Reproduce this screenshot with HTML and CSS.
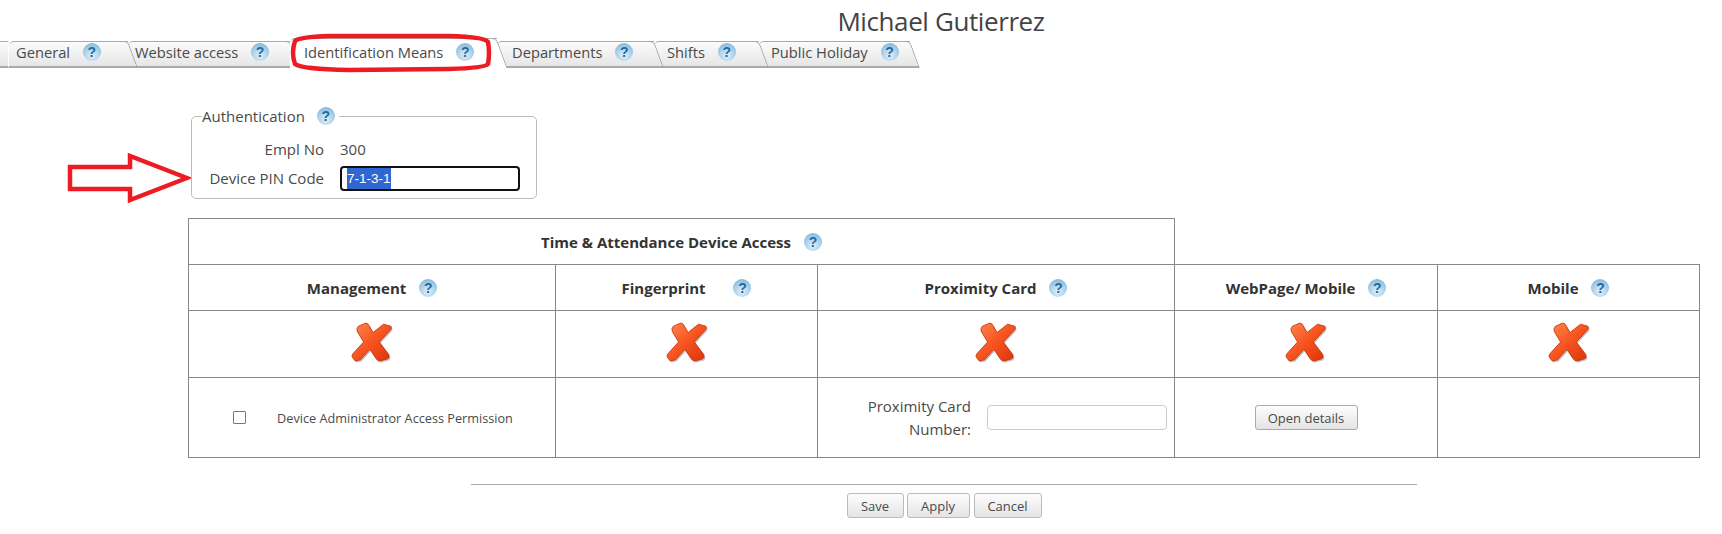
FILE: index.html

```html
<!DOCTYPE html>
<html lang="en">
<head>
  <meta charset="UTF-8" />
  <title>Michael Gutierrez</title>
  <link rel="stylesheet" href="styles.css">
</head>
<body>
  <svg class="defs" width="0" height="0">
    <defs>
      <linearGradient id="xfill" x1="0" y1="0" x2="1" y2="1">
        <stop offset="0" stop-color="#ff8a50"/>
        <stop offset="0.5" stop-color="#f7541f"/>
        <stop offset="1" stop-color="#d9340c"/>
      </linearGradient>
      <symbol id="cross" viewBox="0 0 40 40">
        <path d="M7 5 L14 2 Q16 2 17 4 L21 11 L31 3 L38 5 Q39 6 38 8 L27 20 L36 32 Q37 35 35 36 L28 38 Q25 38 24 36 L18 27 L9 37 L4 38 L1 34 Q1 32 2 31 L12 20 L6 10 Q5 7 7 5 Z" fill="#7a7a7a" opacity="0.45" transform="translate(1 1.5)"/>
        <path d="M7 5 L14 2 Q16 2 17 4 L21 11 L31 3 L38 5 Q39 6 38 8 L27 20 L36 32 Q37 35 35 36 L28 38 Q25 38 24 36 L18 27 L9 37 L4 38 L1 34 Q1 32 2 31 L12 20 L6 10 Q5 7 7 5 Z" fill="url(#xfill)" stroke="#c8300c" stroke-width="0.8"/>
      </symbol>
    </defs>
  </svg>

  <h1 class="title">Michael Gutierrez</h1>

  <div class="tabs">
    <div class="tab-stub"></div>
    <div class="tab tab-general">General <span class="help">?</span></div>
    <div class="tab tab-web">Website access <span class="help">?</span></div>
    <div class="tab tab-id active">Identification Means <span class="help">?</span></div>
    <div class="tab tab-dep">Departments <span class="help">?</span></div>
    <div class="tab tab-shifts">Shifts <span class="help">?</span></div>
    <div class="tab tab-hol">Public Holiday <span class="help">?</span></div>
  </div>

  <!-- red marks drawn over the page -->
  <svg class="mark mark-ring" width="204" height="40" viewBox="0 0 204 40">
    <path d="M6 8 Q10 4 40 3 L160 3 Q196 4 199 9 Q201 20 199 31 Q196 35 160 36 L60 37 Q12 36 6 31 Q2 20 6 8 Z" fill="none" stroke="#ed1c24" stroke-width="4.5"/>
  </svg>
  <svg class="mark mark-arrow" width="124" height="52" viewBox="0 0 124 52">
    <path d="M3 14 H63 V3 L120 25 L63 47 V36 H3 Z" fill="none" stroke="#ed1c24" stroke-width="4.5"/>
  </svg>

  <fieldset class="auth">
    <legend>Authentication <span class="help">?</span></legend>
    <div class="auth-row">
      <span class="auth-label">Empl No</span>
      <span>300</span>
    </div>
    <div class="auth-row">
      <span class="auth-label">Device PIN Code</span>
      <div class="pin-input"><span class="selected">7-1-3-1</span></div>
    </div>
  </fieldset>

  <table class="access">
    <colgroup>
      <col class="c1"><col class="c2"><col class="c3"><col class="c4"><col class="c5">
    </colgroup>
    <tr class="row-title">
      <th colspan="3">Time &amp; Attendance Device Access <span class="help">?</span></th>
      <td class="blank" colspan="2"></td>
    </tr>
    <tr class="row-head">
      <th>Management <span class="help">?</span></th>
      <th>Fingerprint <span class="help help-far">?</span></th>
      <th>Proximity Card <span class="help">?</span></th>
      <th>WebPage/ Mobile <span class="help">?</span></th>
      <th>Mobile <span class="help">?</span></th>
    </tr>
    <tr class="row-icons">
      <td><svg class="cross"><use href="#cross"/></svg></td>
      <td><svg class="cross"><use href="#cross"/></svg></td>
      <td><svg class="cross"><use href="#cross"/></svg></td>
      <td><svg class="cross"><use href="#cross"/></svg></td>
      <td><svg class="cross"><use href="#cross"/></svg></td>
    </tr>
    <tr class="row-detail">
      <td>
        <div class="perm">
          <span class="checkbox"></span>
          <span>Device Administrator Access Permission</span>
        </div>
      </td>
      <td></td>
      <td>
        <div class="prox">
          <span class="prox-label">Proximity Card Number:</span>
          <input class="text-input" type="text">
        </div>
      </td>
      <td><button class="btn btn-open">Open details</button></td>
      <td></td>
    </tr>
  </table>

  <div class="actions">
    <button class="btn btn-save">Save</button>
    <button class="btn btn-apply">Apply</button>
    <button class="btn btn-cancel">Cancel</button>
  </div>
</body>
</html>
```

FILE: styles.css

```css
body {
  margin: 0;
  background-color: #fff;
  color: #4a4a4a;
  font-family: "Open Sans", "Noto Sans", sans-serif;
  font-size: 15px;
  position: relative;
  height: 534px;
  overflow: hidden;
}

.defs {
  position: absolute;
}

.title {
  margin: 0;
  height: 40px;
  padding-left: 160px;
  text-align: center;
  font-size: 26px;
  line-height: 42px;
  font-weight: 400;
  color: #444;
  letter-spacing: -0.4px;
}

.help {
  display: inline-block;
  width: 18px;
  height: 18px;
  margin-left: 9px;
  border-radius: 50%;
  background: radial-gradient(circle at 50% 70%, #e3f1fa 0%, #a9d0ea 50%, #6fa9d4 100%);
  color: #1f6aa0;
  font-family: "Liberation Sans", sans-serif;
  font-size: 14px;
  font-weight: bold;
  line-height: 18px;
  text-align: center;
  vertical-align: 1px;
  letter-spacing: 0;
}

.help-far {
  margin-left: 24px;
}

/* tabs */
.tabs {
  display: flex;
  height: 28px;
  font-size: 14.7px;
}

.tab-stub {
  width: 9px;
  margin-top: 1px;
  box-sizing: border-box;
  background: linear-gradient(#fbfbfb, #e6e6e6);
  border-top: 1px solid #aaa;
  border-bottom: 2px solid #aaa;
  border-right: 1px solid #fff;
}

.tab {
  position: relative;
  box-sizing: border-box;
  height: 27px;
  margin-top: 1px;
  padding-left: 7px;
  line-height: 21px;
  white-space: nowrap;
  background: linear-gradient(#fbfbfb, #e6e6e6);
  border-top: 1px solid #aaa;
  border-bottom: 2px solid #aaa;
  border-top-left-radius: 5px;
}

.tab::after {
  content: "";
  position: absolute;
  top: -1px;
  bottom: -2px;
  right: -5px;
  width: 14px;
  box-sizing: border-box;
  background: linear-gradient(#fbfbfb, #e6e6e6);
  border-top: 1px solid #aaa;
  border-bottom: 2px solid #aaa;
  border-right: 1px solid #999;
  border-top-right-radius: 5px;
  transform: skewX(20deg);
  z-index: 1;
}

.tab .help {
  position: relative;
  z-index: 2;
}

.tab.active {
  height: 30px;
  margin-top: -2px;
  padding-left: 14px;
  line-height: 27px;
  background: #fff;
  border-bottom: 0;
  z-index: 3;
}

.tab.active::after {
  background: #fff;
  border-bottom: 0;
  bottom: 0;
}

.tab-general { width: 119px; }
.tab-web { width: 162px; }
.tab-id { width: 207px; }
.tab-dep { width: 157px; padding-left: 15px; }
.tab-shifts { width: 105px; padding-left: 13px; }
.tab-hol { width: 151px; padding-left: 12px; }

/* red marks */
.mark {
  position: absolute;
}

.mark-ring {
  left: 289px;
  top: 33px;
  z-index: 5;
}

.mark-arrow {
  left: 67px;
  top: 153px;
}

/* authentication box */
.auth {
  box-sizing: border-box;
  width: 346px;
  height: 93px;
  margin: 38px 0 0 191px;
  padding: 0 15px 0 0;
  border: 1px solid #bbb;
  border-radius: 5px;
}

.auth legend {
  padding: 0;
  margin-left: 10px;
  padding-right: 4px;
  line-height: 20px;
}

.auth legend .help {
  margin-left: 8px;
}

.auth-row {
  display: flex;
  align-items: center;
  height: 26px;
  margin-top: 3px;
}

.auth-row:first-of-type {
  margin-top: 10px;
}

.auth-label {
  width: 132px;
  margin-right: 16px;
  text-align: right;
}

.pin-input {
  box-sizing: border-box;
  width: 180px;
  height: 25px;
  padding: 0 5px;
  border: 2px solid #111;
  border-radius: 4px;
  font-family: "Liberation Sans", sans-serif;
  font-size: 13.5px;
  line-height: 21px;
}

.selected {
  display: inline-block;
  background-color: #2f66d0;
  color: #fff;
}

/* access table */
.access {
  width: 1511px;
  margin: 19px 0 0 188px;
  border-collapse: collapse;
  table-layout: fixed;
}

.c1 { width: 367px; }
.c2 { width: 262px; }
.c3 { width: 357px; }
.c4 { width: 263px; }
.c5 { width: 262px; }

.access th,
.access td {
  padding: 0;
  border: 1px solid #888;
  text-align: center;
  color: #333;
}

.access .blank {
  border-top: 0;
  border-right: 0;
}

.row-title { height: 46px; }
.row-head { height: 46px; }
.row-icons { height: 67px; }
.row-detail { height: 80px; }

.cross {
  display: block;
  width: 42px;
  height: 42px;
  margin: -5px auto 0;
}

.perm {
  display: flex;
  align-items: center;
  justify-content: center;
  gap: 31px;
  padding-left: 2px;
  font-size: 12.7px;
  color: #4a4a4a;
}

.checkbox {
  width: 13px;
  height: 13px;
  box-sizing: border-box;
  border: 1px solid #777;
  border-radius: 1px;
}

.prox {
  display: flex;
  align-items: center;
  justify-content: flex-end;
  gap: 16px;
  padding-right: 7px;
  line-height: 23px;
  color: #4a4a4a;
}

.prox-label {
  width: 110px;
  text-align: right;
}

.text-input {
  box-sizing: border-box;
  width: 180px;
  height: 25px;
  border: 1px solid #ccc;
  border-radius: 4px;
}

/* buttons */
.btn {
  box-sizing: border-box;
  height: 25px;
  padding: 0;
  border: 1px solid #bbb;
  border-radius: 3px;
  background: linear-gradient(#fdfdfd, #e4e4e4);
  color: #4a4a4a;
  font-family: "Open Sans", sans-serif;
  font-size: 13px;
}

.btn-open { width: 103px; border-color: #aaa; }
.btn-save { width: 57px; }
.btn-apply { width: 63px; margin-left: 3px; }
.btn-cancel { width: 68px; margin-left: 4px; }

.actions {
  width: 946px;
  margin: 26px 0 0 471px;
  padding-top: 8px;
  border-top: 1px solid #aaa;
  text-align: center;
  font-size: 0;
}
```
